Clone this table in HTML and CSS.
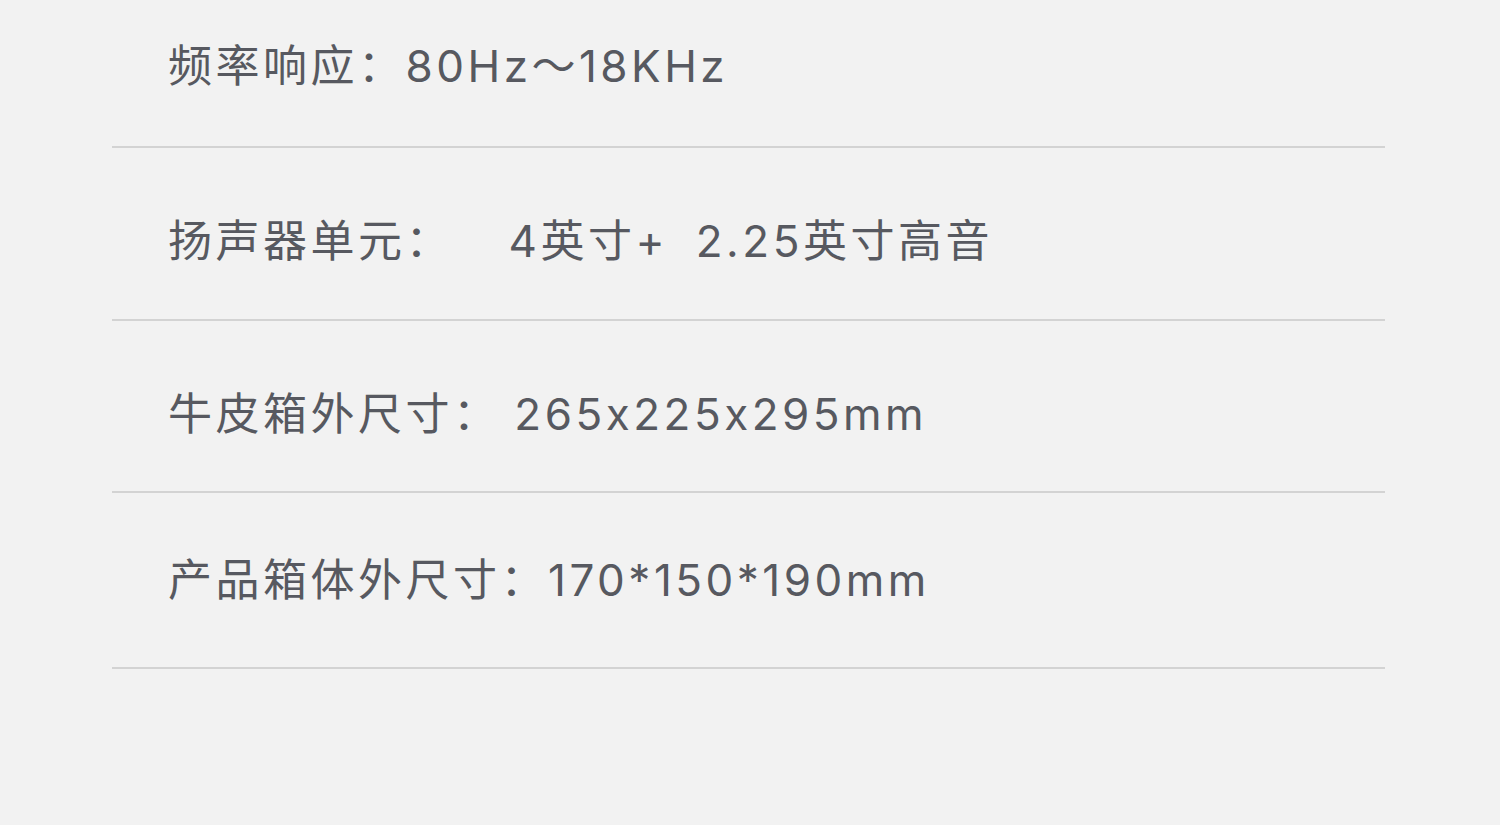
FILE: index.html
```html
<!DOCTYPE html>
<html lang="zh-CN">

<head>
    <meta charset="UTF-8">
    <meta name="viewport" content="width=device-width, initial-scale=1.0">
    <title>产品参数</title>
    <link rel="stylesheet" href="styles.css">
</head>

<body>

    <!-- Spec list -->
    <ul class="spec-list">
        <li class="spec-row"><span class="spec-text">频率响应：80Hz～18KHz</span></li>
        <li class="spec-row"><span class="spec-text">扬声器单元：    4英寸+  2.25英寸高音</span></li>
        <li class="spec-row"><span class="spec-text">牛皮箱外尺寸： 265x225x295mm</span></li>
        <li class="spec-row"><span class="spec-text">产品箱体外尺寸：170*150*190mm</span></li>
    </ul>

</body>

</html>
```

FILE: styles.css
```css
body {
    margin: 0;
    background-color: #f2f2f2;
    font-family: Inter, 'Noto Sans CJK SC', sans-serif;
    color: #575960;
    min-height: 100vh;
}

.spec-list {
    list-style: none;
    margin: 0 115px 0 112px;
    padding: 0;
}

.spec-row {
    padding: 68px 0 53px 56px;
    border-bottom: 2px solid #d3d3d3;
}

.spec-row:first-child {
    padding-top: 41px;
    padding-bottom: 55px;
}

.spec-row:nth-child(3) {
    padding-bottom: 52px;
}

.spec-row:nth-child(4) {
    padding-top: 62px;
    padding-bottom: 62px;
}

.spec-text {
    display: block;
    font-size: 44px;
    line-height: 50px;
    letter-spacing: 3.5px;
    word-spacing: -2px;
    white-space: pre;
}
```
